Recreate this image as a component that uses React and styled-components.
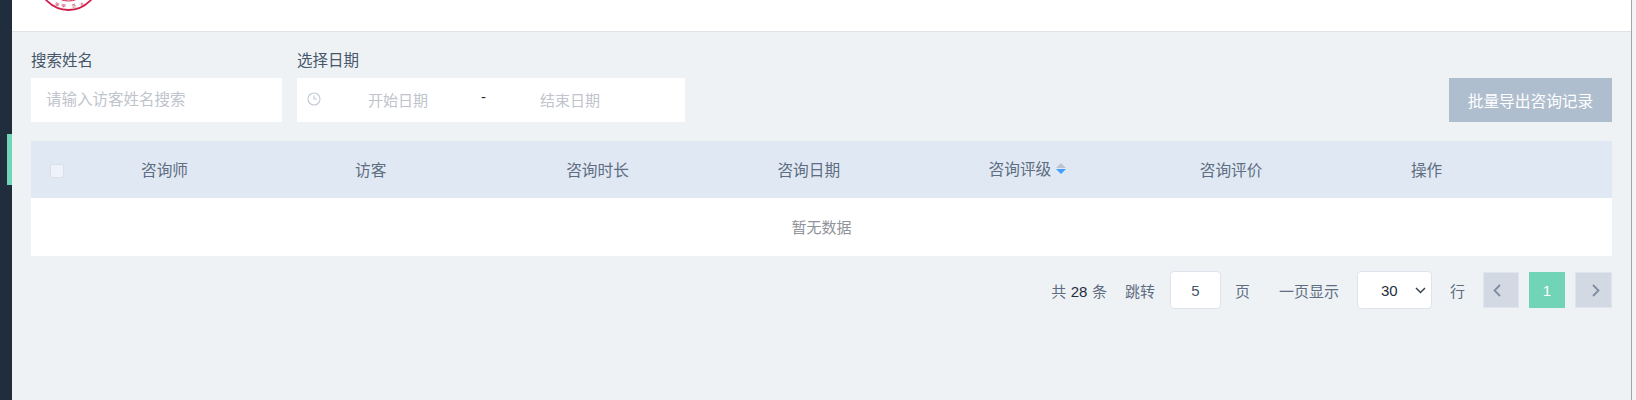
import React from 'react';
import styled, { createGlobalStyle } from 'styled-components';

const GlobalStyle = createGlobalStyle`
  html, body {
    margin: 0;
    padding: 0;
    height: 400px;
    overflow: hidden;
    font-family: "Liberation Sans", "Noto Sans CJK SC", sans-serif;
  }
  * { box-sizing: border-box; }
`;

const selectArrow = encodeURIComponent(
  '<svg xmlns="http://www.w3.org/2000/svg" width="11" height="7" viewBox="0 0 11 7" fill="none"><path d="M1 1l4.5 4.5L10 1" stroke="#39424f" stroke-width="1.5"/></svg>'
);

const Page = styled.div`
  display: flex;
  height: 400px;
  background: #eef2f5;
`;

const Sidebar = styled.aside`
  flex: none;
  width: 12px;
  background: #1f2d3d;
  display: flex;
  flex-direction: column;
  align-items: flex-end;
`;

const ActiveMark = styled.div`
  width: 5px;
  height: 51px;
  margin-top: 134px;
  background: #72d4b6;
`;

const Main = styled.main`
  flex: 1;
  min-width: 0;
  display: flex;
  flex-direction: column;
`;

const ScrollEdge = styled.div`
  flex: none;
  width: 5px;
  background: #f4f4f4;
  border-left: 1px solid #a6a6a6;
`;

const TopBar = styled.header`
  flex: none;
  height: 32px;
  padding-left: 32px;
  background: #fff;
  border-bottom: 1px solid #dfe3e8;
`;

const Seal = styled.svg`
  display: block;
`;

const Content = styled.div`
  padding: 19px 19px 0 19px;
  display: flex;
  flex-direction: column;
`;

const FilterRow = styled.div`
  display: flex;
  align-items: flex-end;
  gap: 15px;
`;

const Field = styled.div`
  display: flex;
  flex-direction: column;
  gap: 7px;
`;

const Label = styled.label`
  font-size: 15.5px;
  line-height: 20px;
  color: #475669;
`;

const NameInput = styled.input`
  width: 251px;
  height: 44px;
  padding: 0 15px;
  border: 0;
  outline: 0;
  background: #fff;
  font-family: inherit;
  font-size: 15.5px;
  &::placeholder { color: #c0c4cc; opacity: 1; }
`;

const DateRange = styled.div`
  width: 388px;
  height: 44px;
  background: #fff;
  display: flex;
  align-items: center;
  padding-left: 10px;
  font-size: 15px;
  color: #c0c4cc;
`;

const ClockIcon = styled.svg`
  flex: none;
  margin-top: -3px;
`;

const DateText = styled.span`
  margin-left: ${p => p.$offset}px;
  margin-top: -2px;
`;

const Dash = styled.span`
  margin-left: 53px;
  margin-top: -8px;
  color: #1f2d3d;
`;

const ExportButton = styled.button`
  margin-left: auto;
  width: 163px;
  height: 44px;
  padding: 0;
  border: 0;
  background: #afbecf;
  color: #fff;
  font-family: inherit;
  font-size: 15.7px;
`;

const Table = styled.div`
  margin-top: 19px;
`;

const HeadRow = styled.div`
  height: 57px;
  display: grid;
  grid-template-columns: 110px 214px repeat(6, 211.2px);
  align-items: center;
  background: #e0e9f3;
  font-size: 15.7px;
  color: #5e6d82;
`;

const CheckCell = styled.div`
  padding-left: 19px;
  margin-top: 2px;
  display: flex;
`;

const CheckBox = styled.input.attrs({ type: 'checkbox' })`
  appearance: none;
  width: 14px;
  height: 14px;
  margin: 0;
  background: #edf2fb;
  border: 1px solid #dcdfe6;
  border-radius: 2px;
`;

const HeadCell = styled.div`
  display: flex;
  align-items: center;
  gap: 5px;
  margin-top: ${p => (p.$raised ? -3 : 0)}px;
`;

const SortIcon = styled.svg`
  flex: none;
`;

const EmptyRow = styled.div`
  height: 58px;
  padding-bottom: 2px;
  display: flex;
  align-items: center;
  justify-content: center;
  background: #fff;
  font-size: 15px;
  color: #909399;
`;

const Pager = styled.div`
  margin-top: 15px;
  height: 38px;
  display: flex;
  align-items: center;
  justify-content: flex-end;
  font-size: 15px;
  color: #5e6d82;
`;

const Total = styled.span`
  margin-right: 18px;
  b { font-weight: 400; color: #1f2d3d; margin: 0 4.5px; }
`;

const PageInput = styled.input`
  width: 51px;
  height: 38px;
  margin: 0 14px 0 15px;
  border: 1px solid #dfe3ec;
  border-radius: 4px;
  outline: 0;
  background: #fff;
  text-align: center;
  font-family: inherit;
  font-size: 15px;
  color: #475669;
`;

const SizeSelect = styled.select`
  appearance: none;
  width: 75px;
  height: 38px;
  margin: 0 18px;
  padding-left: 23px;
  border: 1px solid #dfe3ec;
  border-radius: 4px;
  outline: 0;
  background: #fff url("data:image/svg+xml,${selectArrow}") no-repeat 57px center;
  font-family: inherit;
  font-size: 15px;
  color: #1f2d3d;
`;

const PerPage = styled.span`
  margin-left: 29px;
`;

const PagerButton = styled.div`
  width: ${p => p.$width || 36}px;
  height: 36px;
  display: flex;
  align-items: center;
  justify-content: center;
  margin-left: ${p => p.$gap}px;
  padding: ${p => p.$inset || 0};
  background: ${p => (p.$active ? '#72d4b6' : '#d2d9e3')};
  border: 1px solid ${p => (p.$active ? '#72d4b6' : '#dfe5ef')};
  color: #fff;
  font-size: 15px;
`;

const columns = ['咨询师', '访客', '咨询时长', '咨询日期', '咨询评级', '咨询评价', '操作'];

const sealChars = [
  { c: '学', x: 57, y: 4, r: 24 },
  { c: '甲', x: 63.5, y: 5.5, r: 10 },
  { c: '氏', x: 74, y: 5.5, r: -12 },
  { c: '大', x: 82, y: 4, r: -26 },
];

function SealMark() {
  // only the bottom of the round seal shows above the header edge
  return (
    <Seal width="50" height="12" viewBox="44 0 50 12" fill="none">
      <circle cx="68.5" cy="-20" r="30" stroke="#cf1f4d" strokeWidth="1.8" />
      <circle cx="68.5" cy="-20" r="21" stroke="#cf1f4d" strokeWidth="1" />
      {sealChars.map(s => (
        <text
          key={s.c}
          x={s.x - 2.25}
          y={s.y + 2}
          fontSize="4.5"
          fill="#c4123f"
          fontFamily="Noto Sans CJK SC"
          transform={`rotate(${s.r} ${s.x} ${s.y})`}
        >
          {s.c}
        </text>
      ))}
    </Seal>
  );
}

function Chevron({ left }) {
  return (
    <svg width="8" height="13" viewBox="0 0 8 13" fill="none">
      <path d={left ? 'M7 1 1.5 6.5 7 12' : 'M1 1l5.5 5.5L1 12'} stroke="#7f8ca3" strokeWidth="1.8" />
    </svg>
  );
}

export default function App() {
  return (
    <>
      <GlobalStyle />
      <Page>
        <Sidebar>
          <ActiveMark />
        </Sidebar>
        <Main>
          <TopBar>
            <SealMark />
          </TopBar>
          <Content>
            <FilterRow>
              <Field>
                <Label>搜索姓名</Label>
                <NameInput placeholder="请输入访客姓名搜索" />
              </Field>
              <Field>
                <Label>选择日期</Label>
                <DateRange>
                  <ClockIcon width="14" height="14" viewBox="0 0 14 14" fill="none" stroke="#c0c9d6" strokeWidth="1.1">
                    <circle cx="7" cy="7" r="6" />
                    <path d="M7 3.5V7h3" />
                  </ClockIcon>
                  <DateText $offset={47}>开始日期</DateText>
                  <Dash>-</Dash>
                  <DateText $offset={54}>结束日期</DateText>
                </DateRange>
              </Field>
              <ExportButton>批量导出咨询记录</ExportButton>
            </FilterRow>
            <Table>
              <HeadRow>
                <CheckCell>
                  <CheckBox />
                </CheckCell>
                {columns.map(name => (
                  <HeadCell key={name} $raised={name === '咨询评级'}>
                    {name}
                    {name === '咨询评级' && (
                      <SortIcon width="10" height="11" viewBox="0 0 10 11">
                        <path d="M5 0 10 5H0z" fill="#c0c4cc" />
                        <path d="M5 11 10 6H0z" fill="#409eff" />
                      </SortIcon>
                    )}
                  </HeadCell>
                ))}
              </HeadRow>
              <EmptyRow>暂无数据</EmptyRow>
            </Table>
            <Pager>
              <Total>共<b>28</b>条</Total>
              <span>跳转</span>
              <PageInput defaultValue="5" />
              <span>页</span>
              <PerPage>一页显示</PerPage>
              <SizeSelect defaultValue="30">
                <option value="30">30</option>
              </SizeSelect>
              <span>行</span>
              <PagerButton $gap={18} $inset="0 8px 0 0"><Chevron left /></PagerButton>
              <PagerButton $gap={10} $active>1</PagerButton>
              <PagerButton $gap={10} $width={37} $inset="0 0 0 4px"><Chevron /></PagerButton>
            </Pager>
          </Content>
        </Main>
        <ScrollEdge />
      </Page>
    </>
  );
}
